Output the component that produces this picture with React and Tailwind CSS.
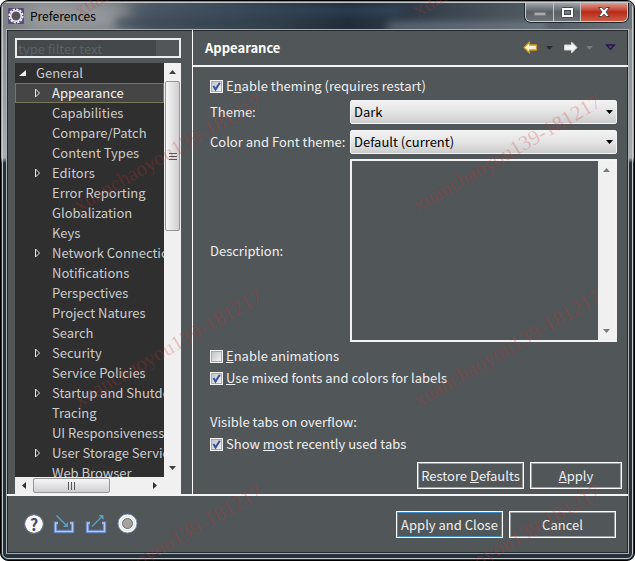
import { useState } from "react";

const TREE = [
  { label: "Appearance", expandable: true },
  { label: "Capabilities" },
  { label: "Compare/Patch" },
  { label: "Content Types" },
  { label: "Editors", expandable: true },
  { label: "Error Reporting" },
  { label: "Globalization" },
  { label: "Keys" },
  { label: "Network Connections", expandable: true },
  { label: "Notifications" },
  { label: "Perspectives" },
  { label: "Project Natures" },
  { label: "Search" },
  { label: "Security", expandable: true },
  { label: "Service Policies" },
  { label: "Startup and Shutdown", expandable: true },
  { label: "Tracing" },
  { label: "UI Responsiveness" },
  { label: "User Storage Service", expandable: true },
  { label: "Web Browser" },
];

const STAMPS = [
  "left-[61px] top-[-54px]",
  "left-[400px] top-[-54px]",
  "left-[61px] top-[141px]",
  "left-[400px] top-[141px]",
  "left-[61px] top-[336px]",
  "left-[400px] top-[336px]",
  "left-[61px] top-[531px]",
  "left-[400px] top-[531px]",
];

const ARROWS = {
  up: "M0 4 L3.5 0 L7 4Z",
  down: "M0 0 H7 L3.5 4Z",
  left: "M4 0 V7 L0 3.5Z",
  right: "M0 0 V7 L4 3.5Z",
};

const Arrow = ({ dir, className = "" }) => {
  const sideways = dir === "left" || dir === "right";
  return (
    <svg width={sideways ? 4 : 7} height={sideways ? 7 : 4} className={className} aria-hidden="true">
      <path d={ARROWS[dir]} fill="currentColor" />
    </svg>
  );
};

const EclipseIcon = () => (
  <svg width="16" height="16" viewBox="0 0 16 16" className="shrink-0" aria-hidden="true">
    <rect width="16" height="16" rx="1" fill="#5a4a80" />
    <circle cx="8" cy="8" r="6.6" fill="none" stroke="#e9e6ee" strokeWidth="2" strokeDasharray="2.3 1.15" />
    <circle cx="8" cy="8" r="5.3" fill="#55535e" stroke="#f4f2f6" strokeWidth="1.5" />
  </svg>
);

const CaptionButtons = () => (
  <div className="mr-1 flex h-[19px] self-start overflow-hidden rounded-b-md border border-t-0 border-[#c9cdd1] shadow-[0_0_0_1px_#20262b]">
    <button
      type="button"
      aria-label="Minimize"
      className="flex w-7 items-center justify-center border-r border-[#c0c4c8] bg-linear-to-b from-[#a1a5a9] via-[#5a6066] via-50% to-[#6d7378]"
    >
      <span className="mt-1 h-1 w-3 border border-[#7c8084] bg-[#a9acae]" />
    </button>
    <button
      type="button"
      aria-label="Maximize"
      className="flex w-[27px] items-center justify-center border-r border-[#c0c4c8] bg-linear-to-b from-[#a1a5a9] via-[#5a6066] via-50% to-[#6d7378]"
    >
      <svg width="13" height="11" aria-hidden="true">
        <rect x="0.5" y="0.5" width="12" height="10" rx="1" fill="#fff" stroke="#444a55" />
        <rect x="3.5" y="3.5" width="6" height="4" fill="#74797e" stroke="#444a55" />
      </svg>
    </button>
    <button
      type="button"
      aria-label="Close"
      className="flex w-[46px] items-center justify-center bg-linear-to-b from-[#dd9a90] via-[#b92814] via-50% to-[#cf5a42]"
    >
      <svg width="14" height="12" viewBox="0 0 14 12" aria-hidden="true">
        <path
          d="M1.5 1.5 H4.8 L7 3.8 L9.2 1.5 H12.5 L9 6 L12.5 10.5 H9.2 L7 8.2 L4.8 10.5 H1.5 L5 6Z"
          fill="#fff"
          stroke="#4d3f4a"
          strokeWidth="1"
        />
      </svg>
    </button>
  </div>
);

const TitleBar = () => (
  <header className="relative flex h-[26px] shrink-0 items-center overflow-hidden bg-linear-to-r from-[#7d8083] via-[#202d39] via-55% to-[#6d757b]">
    <div className="absolute -top-1 left-4 h-9 w-28 rounded-full bg-[#a9abac]/80 blur-md" />
    <div className="absolute top-1 left-32 h-2 w-68 rounded-full bg-[#35506c]/60 blur-xs" />
    <div className="absolute top-4 left-28 h-2 w-44 rounded-full bg-[#2f4050]/80 blur-xs" />
    <div className="absolute top-5 left-96 h-2 w-40 rounded-full bg-[#8d9aa6]/60 blur-xs" />
    <div className="relative flex flex-1 items-center gap-1.5 pl-[5px]">
      <EclipseIcon />
      <h1 className="text-[12px] leading-4 text-black">Preferences</h1>
    </div>
    <div className="relative flex self-start">
      <CaptionButtons />
    </div>
  </header>
);

const TreeItem = ({ item, selected, onSelect }) => (
  <li>
    <button
      type="button"
      onClick={() => onSelect(item.label)}
      className={`flex h-5 w-full items-center border pl-[18px] text-left whitespace-nowrap ${
        selected ? "border-[#77775a] bg-[#454545] text-[#f4f4f4]" : "border-transparent text-[#cccccc]"
      }`}
    >
      <span className="flex w-[18px] shrink-0 items-center">
        {item.expandable && (
          <svg width="7" height="10" aria-hidden="true">
            <path d="M1.5 1 V9 L5.5 5Z" fill="none" stroke="#e8e8e8" strokeWidth="1" />
          </svg>
        )}
      </span>
      {item.label}
    </button>
  </li>
);

const Tree = ({ selected, onSelect }) => (
  <div className="flex min-h-0 flex-1 flex-col">
    <div className="flex min-h-0 flex-1">
      <nav className="min-w-0 flex-1 overflow-hidden bg-[#2f2f2f] text-[13px] leading-5">
        <button type="button" className="flex h-5 w-full items-center text-left text-[#cccccc]">
          <span className="flex w-[21px] pl-1">
            <svg width="7" height="7" aria-hidden="true">
              <path d="M7 0 V6 H0Z" fill="#f0f0f0" />
            </svg>
          </span>
          General
        </button>
        <ul>
          {TREE.map((item) => (
            <TreeItem key={item.label} item={item} selected={item.label === selected} onSelect={onSelect} />
          ))}
        </ul>
      </nav>
      <div className="flex w-[17px] flex-col items-center bg-[#f0f0f0] text-[#404040]">
        <span className="flex h-[18px] items-center">
          <Arrow dir="up" />
        </span>
        <div className="flex h-[150px] w-[15px] flex-col items-center justify-center gap-0.5 rounded-xs border border-[#959595] bg-linear-to-r from-[#f6f6f6] to-[#cfcfd2]">
          <span className="h-px w-2 bg-[#555555]" />
          <span className="h-px w-2 bg-[#555555]" />
          <span className="h-px w-2 bg-[#555555]" />
        </div>
        <span className="mt-auto flex h-[18px] items-center">
          <Arrow dir="down" />
        </span>
      </div>
    </div>
    <div className="flex h-[17px] shrink-0 items-center bg-[#f0f0f0] text-[#303030]">
      <span className="flex w-[18px] justify-center">
        <Arrow dir="left" />
      </span>
      <div className="flex h-[15px] w-[77px] items-center justify-center gap-0.5 rounded-xs border border-[#959595] bg-linear-to-b from-[#f6f6f6] to-[#cfcfd2]">
        <span className="h-2 w-px bg-[#555555]" />
        <span className="h-2 w-px bg-[#555555]" />
        <span className="h-2 w-px bg-[#555555]" />
      </div>
      <span className="mr-[17px] ml-auto flex w-[18px] justify-center">
        <Arrow dir="right" />
      </span>
    </div>
  </div>
);

const CheckRow = ({ id, defaultChecked, children }) => (
  <div className="flex h-[22px] shrink-0 items-center gap-[3px]">
    <span className="relative flex">
      <input
        id={id}
        type="checkbox"
        defaultChecked={defaultChecked}
        className="peer size-[13px] appearance-none border border-[#f4f4f4] bg-linear-to-br from-[#b9bec4] to-[#f8f8f8] outline-1 -outline-offset-2 outline-[#a5abb3]"
      />
      <svg
        width="13"
        height="13"
        className="pointer-events-none absolute inset-0 hidden peer-checked:block"
        aria-hidden="true"
      >
        <path d="M3.5 6 L5.5 9.5 L9.8 2.8" fill="none" stroke="#3a519c" strokeWidth="2" />
      </svg>
    </span>
    <label htmlFor={id}>{children}</label>
  </div>
);

const SelectRow = ({ id, label, options }) => (
  <div className="flex h-[30px] shrink-0 items-center">
    <label htmlFor={id} className="w-[140px] shrink-0 whitespace-nowrap">
      {label}
    </label>
    <div className="relative flex flex-1">
      <select
        id={id}
        className="h-6 w-full appearance-none rounded-xs border border-[#f4f4f4] bg-linear-to-b from-[#f2f2f2] via-[#e4e4e4] via-50% to-[#cccccc] pl-[3px] text-[13px] text-black"
      >
        {options.map((option) => (
          <option key={option}>{option}</option>
        ))}
      </select>
      <Arrow dir="down" className="pointer-events-none absolute top-2.5 right-1 text-black" />
    </div>
  </div>
);

const PushButton = ({ wide, primary, children }) => (
  <button
    type="button"
    className={`h-[27px] border border-white text-[13px] outline-1 -outline-offset-2 ${wide ? "w-[107px]" : "w-[92px]"} ${
      primary ? "outline-[#3c8ccb]" : "outline-[#9a9ea0]"
    }`}
  >
    {children}
  </button>
);

const HistoryToolbar = () => (
  <div className="flex items-center">
    <button type="button" aria-label="Back" className="mr-2">
      <svg width="15" height="13" aria-hidden="true">
        <path d="M1 6.5 L6.5 1 V4 H13.5 V9 H6.5 V12Z" fill="#fff6cf" stroke="#d29325" strokeWidth="1.3" strokeLinejoin="round" />
      </svg>
    </button>
    <button type="button" aria-label="Back history" className="mr-2.5 text-[#2b2d30]">
      <Arrow dir="down" />
    </button>
    <button type="button" aria-label="Forward" className="mr-2">
      <svg width="15" height="13" aria-hidden="true">
        <path d="M14 6.5 L8.5 1 V4 H1.5 V9 H8.5 V12Z" fill="#f5f5f5" stroke="#d4d4d4" strokeWidth="1" strokeLinejoin="round" />
      </svg>
    </button>
    <button type="button" aria-label="Forward history" className="mr-3 text-[#787b7d]">
      <Arrow dir="down" />
    </button>
    <button type="button" aria-label="View menu">
      <svg width="11" height="7" aria-hidden="true">
        <path d="M1.5 1 H9.5 L5.5 5.5Z" fill="#4f4a55" stroke="#2c1458" strokeWidth="1.3" />
      </svg>
    </button>
  </div>
);

const FooterIcons = () => (
  <div className="flex items-center gap-2.5 pb-0.5">
    <button
      type="button"
      aria-label="Help"
      className="flex size-[18px] items-center justify-center rounded-full bg-[#f8f8fa] text-[16px] leading-none font-bold text-[#474b70] outline-1 outline-[#6a7488]"
    >
      ?
    </button>
    <button type="button" aria-label="Import">
      <svg width="22" height="20" aria-hidden="true">
        <path d="M5 9 H2.5 V17.5 H19.5 V9 H17" fill="none" stroke="#5878b8" strokeWidth="3.6" />
        <path d="M5 9 H2.5 V17.5 H19.5 V9 H17" fill="none" stroke="#b4c8ee" strokeWidth="1.6" />
        <path d="M3.5 1.5 L14 12" stroke="#5b9dbf" strokeWidth="1.5" />
        <path d="M15 8 V13 H10Z" fill="#5b9dbf" />
      </svg>
    </button>
    <button type="button" aria-label="Export">
      <svg width="22" height="20" aria-hidden="true">
        <path d="M5 9 H2.5 V17.5 H19.5 V9 H17" fill="none" stroke="#5878b8" strokeWidth="3.6" />
        <path d="M5 9 H2.5 V17.5 H19.5 V9 H17" fill="none" stroke="#b4c8ee" strokeWidth="1.6" />
        <path d="M7 12.5 L17 2.5" stroke="#5b9dbf" strokeWidth="1.5" />
        <path d="M13.5 1 H18.5 V6Z" fill="#5b9dbf" />
      </svg>
    </button>
    <button type="button" aria-label="Oomph recorder">
      <svg width="21" height="21" aria-hidden="true">
        <circle cx="10.5" cy="10.5" r="9.5" fill="#fbfbfb" stroke="#7289a8" strokeWidth="1" />
        <circle cx="10.5" cy="10.5" r="7" fill="none" stroke="#ececec" strokeWidth="2" />
        <circle cx="10.5" cy="10.5" r="5" fill="#a3a3a1" stroke="#6e6e6c" strokeWidth="1" />
      </svg>
    </button>
  </div>
);

export default function App() {
  const [selected, setSelected] = useState("Appearance");

  return (
    <div className="relative h-screen overflow-hidden bg-white font-['Noto_Sans_CJK_SC','Noto_Sans',sans-serif] text-[13px] leading-5 text-[#f0f0f0]">
      <div className="flex h-full flex-col rounded-lg border border-black bg-linear-to-b from-[#80858a] from-0% via-[#a9adb0] via-28% to-[#24313b] to-29% p-px">
        <div className="flex min-h-0 flex-1 flex-col rounded-md border border-[#c5cacd]">
          <TitleBar />
          <div className="mx-[3px] mb-1 flex min-h-0 flex-1 flex-col border border-[#aab0b3] bg-[#515658] shadow-[inset_0_0_0_1px_#23292c]">
            <div className="flex min-h-0 flex-1">
              <aside className="flex w-[186px] shrink-0 flex-col gap-[5px] border-r border-white pt-2 pr-[11px] pl-2">
                <input
                  type="text"
                  aria-label="Filter preferences"
                  placeholder="type filter text"
                  className="h-5 w-full shrink-0 border-2 border-[#ececec] bg-linear-to-r from-[#43484b] from-86% to-[#515658] to-86% px-px text-[13px] leading-4 placeholder:text-[#5c6164]"
                />
                <Tree selected={selected} onSelect={setSelected} />
              </aside>

              <main className="flex min-w-0 flex-1 flex-col">
                <div className="flex h-[37px] shrink-0 items-center justify-between border-b-2 border-[#f4f4f4] px-3">
                  <h2 className="text-[13px] font-bold text-white">{selected}</h2>
                  <HistoryToolbar />
                </div>
                <form className="flex min-h-0 flex-1 flex-col pt-2 pr-1.5 pb-[5px] pl-[17px]">
                  <CheckRow id="theming" defaultChecked>
                    E<u>n</u>able theming (requires restart)
                  </CheckRow>
                  <div className="flex min-h-0 flex-1 flex-col pr-[5px]">
                    <SelectRow id="theme" label="Theme:" options={["Dark", "Classic", "Light"]} />
                    <SelectRow id="fonts" label="Color and Font theme:" options={["Default (current)", "Reduced Palette"]} />
                    <div className="mt-0.5 mb-[3px] flex min-h-0 flex-1 items-center">
                      <label htmlFor="description" className="w-[140px] shrink-0">
                        Description:
                      </label>
                      <div className="flex h-full flex-1 border-2 border-[#f2f2f2]">
                        <textarea id="description" readOnly className="min-w-0 flex-1 resize-none bg-transparent px-1" />
                        <div className="flex w-[17px] flex-col items-center justify-between bg-[#f0f0f0] py-[7px] text-[#7c7c7c]">
                          <Arrow dir="up" />
                          <Arrow dir="down" />
                        </div>
                      </div>
                    </div>
                  </div>
                  <CheckRow id="animations">
                    <u>E</u>nable animations
                  </CheckRow>
                  <CheckRow id="mixed" defaultChecked>
                    <u>U</u>se mixed fonts and colors for labels
                  </CheckRow>
                  <h3 className="mt-[22px] flex h-[22px] shrink-0 items-center">Visible tabs on overflow:</h3>
                  <CheckRow id="mru" defaultChecked>
                    Show <u>m</u>ost recently used tabs
                  </CheckRow>
                  <div className="mt-[7px] flex shrink-0 justify-end gap-1.5">
                    <PushButton wide>
                      Restore <u>D</u>efaults
                    </PushButton>
                    <PushButton>
                      <u>A</u>pply
                    </PushButton>
                  </div>
                </form>
              </main>
            </div>

            <footer className="flex h-[59px] shrink-0 items-center justify-between border-t-2 border-[#f4f4f4] pr-3 pl-[18px]">
              <FooterIcons />
              <div className="flex gap-1.5">
                <PushButton wide primary>
                  Apply and Close
                </PushButton>
                <PushButton wide>Cancel</PushButton>
              </div>
            </footer>
          </div>
        </div>
      </div>

      <div className="pointer-events-none absolute inset-0 overflow-hidden" aria-hidden="true">
        {STAMPS.map((place) => (
          <span
            key={place}
            className={`absolute -rotate-30 font-['Liberation_Serif',serif] text-[21px] leading-6 whitespace-nowrap text-[#d03030]/25 ${place}`}
          >
            xuanchaoyou139-181217
          </span>
        ))}
      </div>
    </div>
  );
}
